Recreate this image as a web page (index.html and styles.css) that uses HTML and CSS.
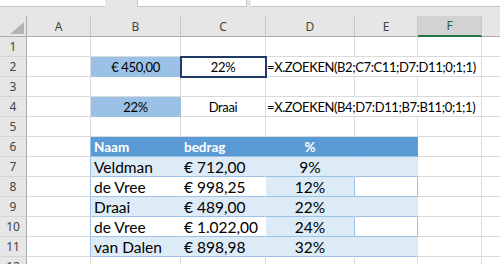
FILE: index.html
```html
<!DOCTYPE html>
<html lang="nl">
<head>
    <meta charset="UTF-8">
    <title>Blad1 - X.ZOEKEN</title>
    <link rel="stylesheet" href="styles.css">
</head>
<body>

<div class="bar">
    <div class="name-box"></div>
    <div class="fx-box"></div>
    <div class="formula-box"></div>
</div>

<table class="sheet">
    <colgroup>
        <col class="c-rh">
        <col class="c-a">
        <col class="c-b">
        <col class="c-c">
        <col class="c-d">
        <col class="c-e">
        <col class="c-f">
        <col class="c-g">
    </colgroup>
    <thead>
        <tr>
            <th class="corner"><svg width="14" height="12" viewBox="0 0 14 12"><polygon points="14,0 14,12 0,12" fill="#b4b4b4"/></svg></th>
            <th>A</th>
            <th>B</th>
            <th>C</th>
            <th>D</th>
            <th>E</th>
            <th class="active">F</th>
            <th></th>
        </tr>
    </thead>
    <tbody>
        <tr>
            <th>1</th><td></td><td></td><td></td><td></td><td></td><td></td><td></td>
        </tr>
        <tr>
            <th>2</th>
            <td></td>
            <td class="fill mid">€ 450,00</td>
            <td class="mid selected">22%</td>
            <td class="formula" colspan="3">=X.ZOEKEN(B2;C7:C11;D7:D11;0;1;1)</td>
            <td></td>
        </tr>
        <tr>
            <th>3</th><td></td><td></td><td></td><td></td><td></td><td></td><td></td>
        </tr>
        <tr>
            <th>4</th>
            <td></td>
            <td class="fill mid">22%</td>
            <td class="mid">Draai</td>
            <td class="formula" colspan="3">=X.ZOEKEN(B4;D7:D11;B7:B11;0;1;1)</td>
            <td></td>
        </tr>
        <tr>
            <th>5</th><td></td><td></td><td></td><td></td><td></td><td></td><td></td>
        </tr>
        <!-- tabel met namen, bedragen en percentages -->
        <tr>
            <th>6</th>
            <td class="edge"></td>
            <td class="t-head">Naam</td>
            <td class="t-head">bedrag</td>
            <td class="t-head mid">%</td>
            <td class="t-head"></td>
            <td></td><td></td>
        </tr>
        <tr class="band">
            <th>7</th>
            <td class="edge"></td>
            <td class="t-cell">Veldman</td>
            <td class="t-cell">€ 712,00</td>
            <td class="t-cell t-pct">9%</td>
            <td class="t-cell t-end"></td>
            <td></td><td></td>
        </tr>
        <tr>
            <th>8</th>
            <td class="edge"></td>
            <td class="t-cell">de Vree</td>
            <td class="t-cell">€ 998,25</td>
            <td class="t-cell t-pct">12%</td>
            <td class="t-cell t-end"></td>
            <td></td><td></td>
        </tr>
        <tr class="band">
            <th>9</th>
            <td class="edge"></td>
            <td class="t-cell">Draai</td>
            <td class="t-cell">€ 489,00</td>
            <td class="t-cell t-pct">22%</td>
            <td class="t-cell t-end"></td>
            <td></td><td></td>
        </tr>
        <tr>
            <th>10</th>
            <td class="edge"></td>
            <td class="t-cell">de Vree</td>
            <td class="t-cell">€ 1.022,00</td>
            <td class="t-cell t-pct">24%</td>
            <td class="t-cell t-end"></td>
            <td></td><td></td>
        </tr>
        <tr class="band">
            <th>11</th>
            <td class="edge"></td>
            <td class="t-cell">van Dalen</td>
            <td class="t-cell">€ 898,98</td>
            <td class="t-cell t-pct">32%</td>
            <td class="t-cell t-end"></td>
            <td></td><td></td>
        </tr>
        <tr>
            <th>12</th><td></td><td></td><td></td><td></td><td></td><td></td><td></td>
        </tr>
    </tbody>
</table>

</body>
</html>
```

FILE: styles.css
```css
body {
    margin: 0;
    background-color: #fff;
    overflow: hidden;
    font-family: Lato, "Liberation Sans", sans-serif;
    color: #000;
}

/* strook boven het blad: naamvak en formulebalk */
.bar {
    display: flex;
    height: 16px;
    background-color: #e6e6e6;
}
.name-box {
    width: 105px;
    height: 6px;
    background-color: #fff;
    border-bottom: 1px solid #c6c6c6;
}
.fx-box {
    width: 108px;
    height: 6px;
    margin-left: 32px;
    background-color: #fff;
    border: 1px solid #c6c6c6;
    border-top: none;
}
.formula-box {
    flex: 1;
    height: 6px;
    margin-left: 4px;
    background-color: #fff;
    border-bottom: 1px solid #c6c6c6;
}

/* het werkblad */
.sheet {
    border-collapse: separate;
    border-spacing: 0;
    table-layout: fixed;
    width: 582px;
}
.c-rh { width: 27px; }
.c-a { width: 64px; }
.c-b { width: 90px; }
.c-c { width: 85px; }
.c-d { width: 89px; }
.c-e { width: 63px; }
.c-f { width: 64px; }
.c-g { width: 100px; }

.sheet th,
.sheet td {
    padding: 0 3px;
    border-right: 1px solid #dadada;
    border-bottom: 1px solid #dadada;
    white-space: nowrap;
    overflow: hidden;
    vertical-align: bottom;
    text-align: left;
    font-size: 13px;
    letter-spacing: -0.35px;
    line-height: 17px;
    font-weight: normal;
}
.sheet tbody tr {
    height: 20px;
}

/* kolom- en rijkoppen */
.sheet thead th {
    height: 19px;
    background-color: #e6e6e6;
    color: #444;
    font-family: "Noto Sans", sans-serif;
    font-size: 12px;
    letter-spacing: 0;
    text-align: center;
    vertical-align: middle;
    border-right-color: #c8c8c8;
    border-bottom-color: #ababab;
}
.sheet thead th.corner {
    padding: 0;
    text-align: right;
    vertical-align: bottom;
    border-right-color: #ababab;
}
.corner svg {
    display: block;
    margin: 0 2px 2px auto;
}
.sheet thead th.active {
    background-color: #d2d2d2;
    color: #2f5c45;
    border-bottom: 2px solid #217346;
}
.sheet tbody th {
    background-color: #e6e6e6;
    color: #444;
    font-family: "Noto Sans", sans-serif;
    font-size: 12px;
    letter-spacing: 0;
    text-align: center;
    vertical-align: middle;
    border-right-color: #ababab;
    border-bottom-color: #d4d4d4;
}

.mid {
    text-align: center !important;
}
.fill {
    background-color: #9bc2e6;
    border-color: #9bc2e6 !important;
}
.selected {
    outline: 2px solid #1f3b63;
    outline-offset: -1px;
}
.formula {
    padding-left: 1px !important;
    overflow: visible !important;
    letter-spacing: -0.4px !important;
}

/* tabel */
.edge {
    border-right-color: #9bc2e6 !important;
}
.t-head {
    background-color: #5b9bd5;
    color: #fff;
    font-weight: bold !important;
    font-size: 13.5px !important;
    letter-spacing: 0 !important;
    border-right-color: #5b9bd5 !important;
    border-bottom-color: #9bc2e6 !important;
}
.t-cell {
    font-size: 15.5px !important;
    letter-spacing: 0 !important;
    border-right-color: #fff !important;
    border-bottom-color: #9bc2e6 !important;
}
.band .t-cell {
    background-color: #ddebf7;
    border-right-color: #ddebf7 !important;
}
.t-pct {
    text-align: center !important;
    background-color: #ddebf7;
    border-right-color: #9bc2e6 !important;
}
.t-end {
    border-right-color: #9bc2e6 !important;
}
```
